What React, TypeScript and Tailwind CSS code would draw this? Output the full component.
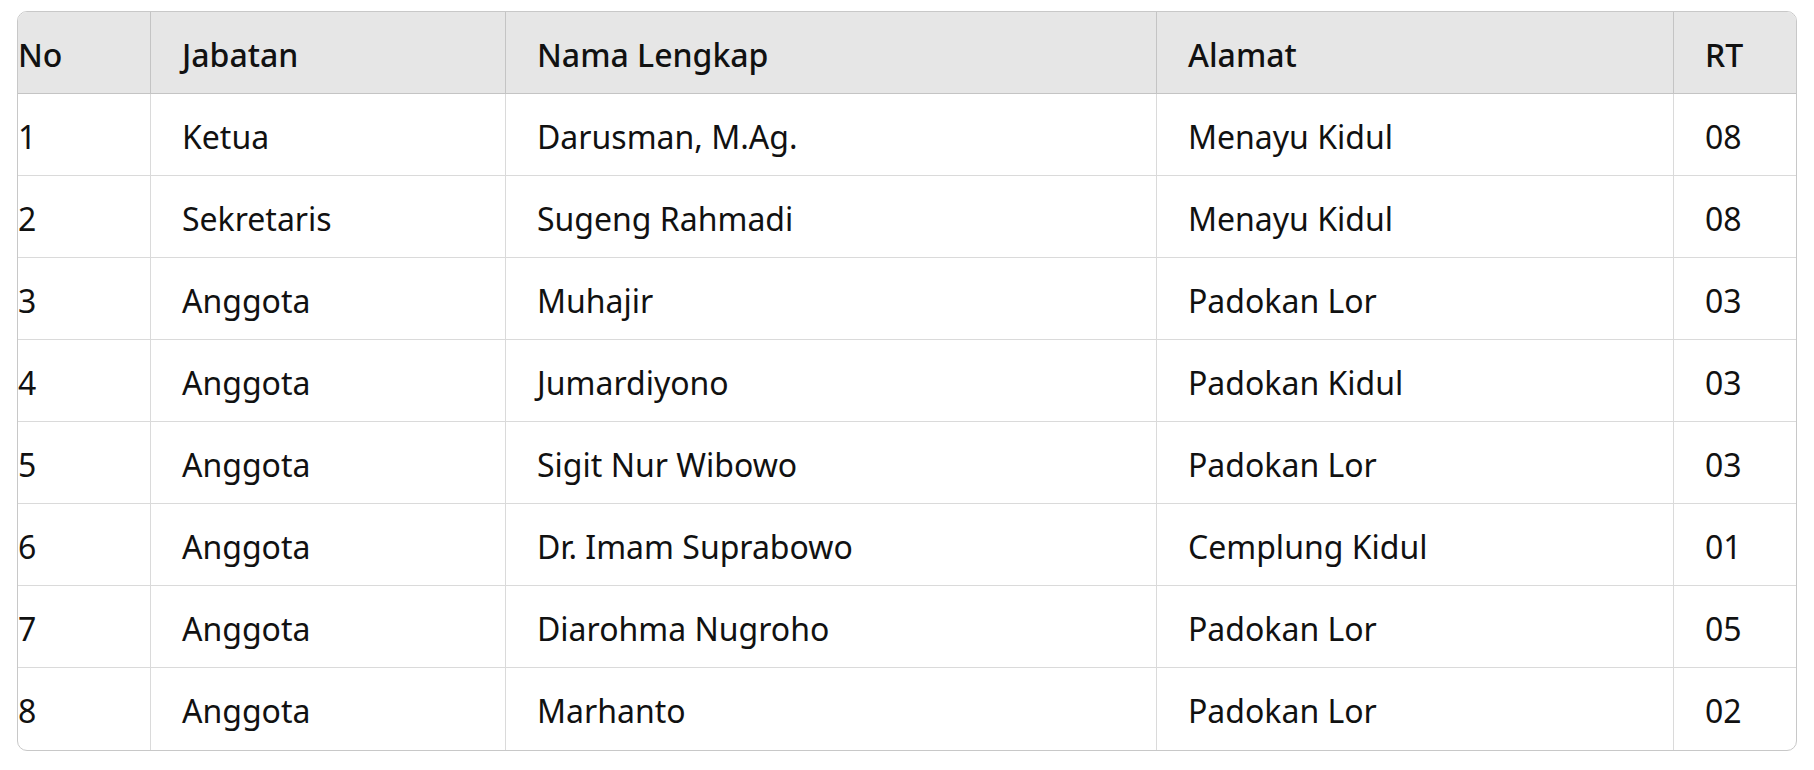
const rows = [
  { no: "1", jabatan: "Ketua", nama: "Darusman, M.Ag.", alamat: "Menayu Kidul", rt: "08" },
  { no: "2", jabatan: "Sekretaris", nama: "Sugeng Rahmadi", alamat: "Menayu Kidul", rt: "08" },
  { no: "3", jabatan: "Anggota", nama: "Muhajir", alamat: "Padokan Lor", rt: "03" },
  { no: "4", jabatan: "Anggota", nama: "Jumardiyono", alamat: "Padokan Kidul", rt: "03" },
  { no: "5", jabatan: "Anggota", nama: "Sigit Nur Wibowo", alamat: "Padokan Lor", rt: "03" },
  { no: "6", jabatan: "Anggota", nama: "Dr. Imam Suprabowo", alamat: "Cemplung Kidul", rt: "01" },
  { no: "7", jabatan: "Anggota", nama: "Diarohma Nugroho", alamat: "Padokan Lor", rt: "05" },
  { no: "8", jabatan: "Anggota", nama: "Marhanto", alamat: "Padokan Lor", rt: "02" },
];

export default function App() {
  return (
    <div className="min-h-screen bg-white pl-[17px] pt-[11px] font-['Noto_Sans',_sans-serif] text-[32px] text-[#111]">
      <div className="w-[1780px] overflow-hidden rounded-[10px] border border-[#c8c8c8]">
        <table className="w-full table-fixed border-separate border-spacing-0">
          <colgroup>
            <col className="w-[133px]" />
            <col className="w-[355px]" />
            <col className="w-[651px]" />
            <col className="w-[517px]" />
            <col className="w-[122px]" />
          </colgroup>
          <thead>
            <tr className="bg-[#e6e6e6]">
              <th className="h-[82px] border-r border-b border-[#c4c4c4] p-0 pt-1 text-left font-medium">No</th>
              <th className="h-[82px] border-r border-b border-[#c4c4c4] pl-[31px] pt-1 text-left font-medium">Jabatan</th>
              <th className="h-[82px] border-r border-b border-[#c4c4c4] pl-[31px] pt-1 text-left font-medium">Nama Lengkap</th>
              <th className="h-[82px] border-r border-b border-[#c4c4c4] pl-[31px] pt-1 text-left font-medium">Alamat</th>
              <th className="h-[82px] border-b border-[#c4c4c4] pl-[31px] pt-1 text-left font-medium">RT</th>
            </tr>
          </thead>
          <tbody>
            {rows.map((r, i) => {
              const last = i === rows.length - 1;
              const line = last ? "" : "border-b";
              return (
                <tr key={r.no}>
                  <td className={`h-[82px] border-r border-[#dadada] p-0 pt-1 ${line}`}>{r.no}</td>
                  <td className={`h-[82px] border-r border-[#dadada] pl-[31px] pt-1 ${line}`}>{r.jabatan}</td>
                  <td className={`h-[82px] border-r border-[#dadada] pl-[31px] pt-1 ${line}`}>{r.nama}</td>
                  <td className={`h-[82px] border-r border-[#dadada] pl-[31px] pt-1 ${line}`}>{r.alamat}</td>
                  <td className={`h-[82px] border-[#dadada] pl-[31px] pt-1 ${line}`}>{r.rt}</td>
                </tr>
              );
            })}
          </tbody>
        </table>
      </div>
    </div>
  );
}
